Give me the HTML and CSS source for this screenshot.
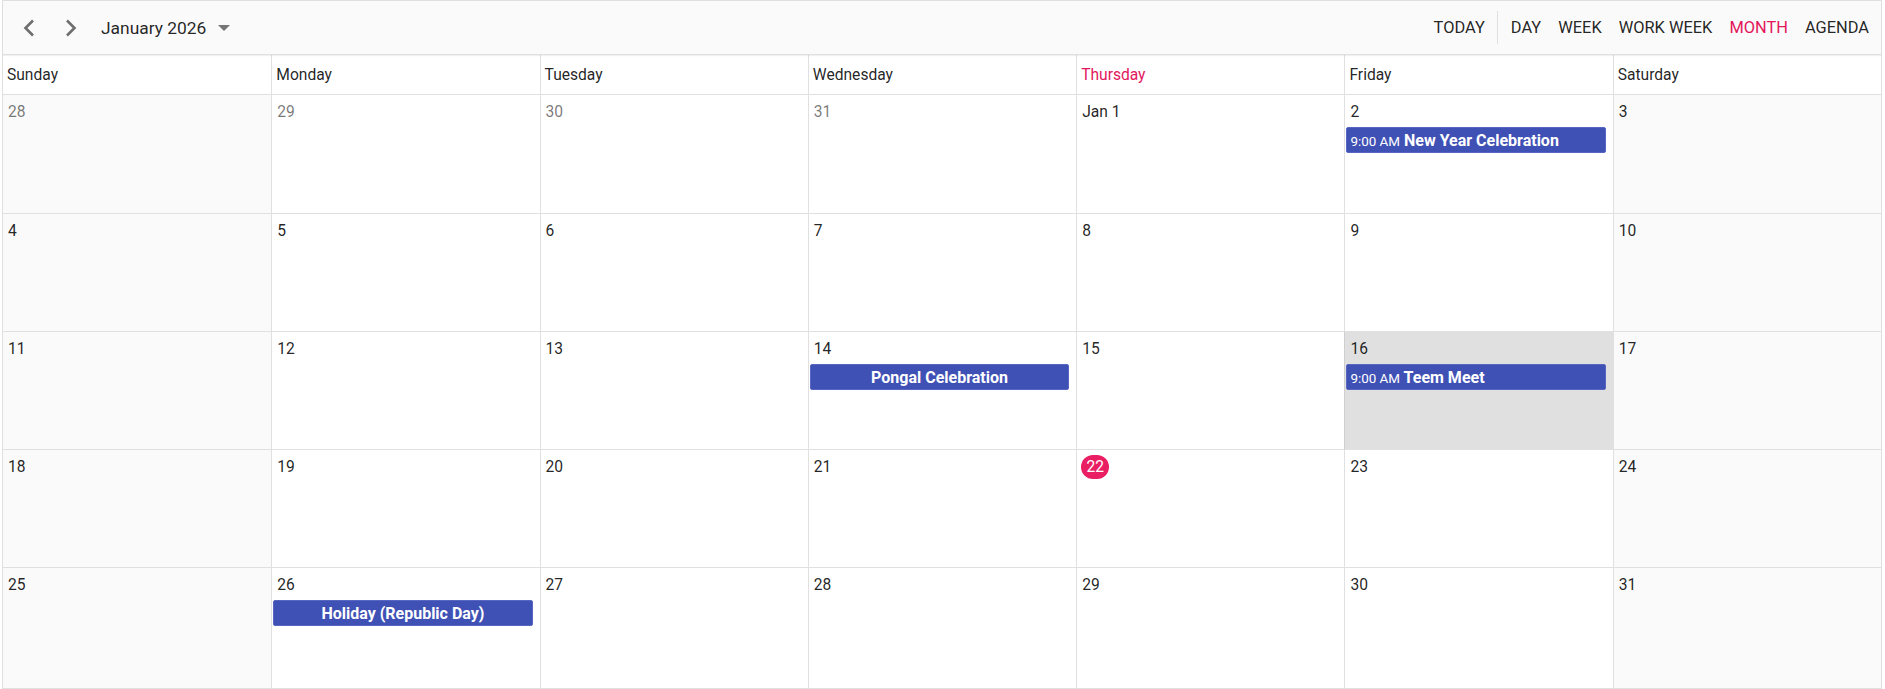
FILE: index.html
```html
<!DOCTYPE html>
<html lang="en">
<head>
    <meta charset="UTF-8">
    <meta name="viewport" content="width=device-width, initial-scale=1.0">
    <title>Schedule - Month</title>
    <link rel="stylesheet" href="styles.css">
</head>
<body>
    <div class="schedule">
        <div class="toolbar">
            <div class="toolbar-left">
                <button class="nav-btn" title="Previous">
                    <svg width="14" height="20" viewBox="0 0 14 20"><path d="M11 2.5 L3.5 10 L11 17.5" fill="none" stroke="#6e6e6e" stroke-width="2.6"/></svg>
                </button>
                <button class="nav-btn" title="Next">
                    <svg width="14" height="20" viewBox="0 0 14 20"><path d="M3 2.5 L10.5 10 L3 17.5" fill="none" stroke="#6e6e6e" stroke-width="2.6"/></svg>
                </button>
                <button class="date-range">January 2026<span class="caret"></span></button>
            </div>
            <div class="toolbar-right">
                <button class="tb-btn">TODAY</button>
                <span class="tb-sep"></span>
                <button class="tb-btn">DAY</button>
                <button class="tb-btn">WEEK</button>
                <button class="tb-btn">WORK WEEK</button>
                <button class="tb-btn active">MONTH</button>
                <button class="tb-btn">AGENDA</button>
            </div>
        </div>

        <div class="day-names">
            <div class="day-name">Sunday</div>
            <div class="day-name">Monday</div>
            <div class="day-name">Tuesday</div>
            <div class="day-name">Wednesday</div>
            <div class="day-name current">Thursday</div>
            <div class="day-name">Friday</div>
            <div class="day-name">Saturday</div>
        </div>

        <div class="month-grid">
            <!-- week 1 -->
            <div class="cell weekend other"><span class="date">28</span></div>
            <div class="cell other"><span class="date">29</span></div>
            <div class="cell other"><span class="date">30</span></div>
            <div class="cell other"><span class="date">31</span></div>
            <div class="cell"><span class="date">Jan 1</span></div>
            <div class="cell">
                <span class="date">2</span>
                <div class="event"><span class="event-time">9:00 AM</span> New Year Celebration</div>
            </div>
            <div class="cell weekend"><span class="date">3</span></div>
            <!-- week 2 -->
            <div class="cell weekend"><span class="date">4</span></div>
            <div class="cell"><span class="date">5</span></div>
            <div class="cell"><span class="date">6</span></div>
            <div class="cell"><span class="date">7</span></div>
            <div class="cell"><span class="date">8</span></div>
            <div class="cell"><span class="date">9</span></div>
            <div class="cell weekend"><span class="date">10</span></div>
            <!-- week 3 -->
            <div class="cell weekend"><span class="date">11</span></div>
            <div class="cell"><span class="date">12</span></div>
            <div class="cell"><span class="date">13</span></div>
            <div class="cell">
                <span class="date">14</span>
                <div class="event all-day">Pongal Celebration</div>
            </div>
            <div class="cell"><span class="date">15</span></div>
            <div class="cell selected">
                <span class="date">16</span>
                <div class="event"><span class="event-time">9:00 AM</span> Teem Meet</div>
            </div>
            <div class="cell weekend"><span class="date">17</span></div>
            <!-- week 4 -->
            <div class="cell weekend"><span class="date">18</span></div>
            <div class="cell"><span class="date">19</span></div>
            <div class="cell"><span class="date">20</span></div>
            <div class="cell"><span class="date">21</span></div>
            <div class="cell"><span class="date today">22</span></div>
            <div class="cell"><span class="date">23</span></div>
            <div class="cell weekend"><span class="date">24</span></div>
            <!-- week 5 -->
            <div class="cell weekend"><span class="date">25</span></div>
            <div class="cell">
                <span class="date">26</span>
                <div class="event all-day">Holiday (Republic Day)</div>
            </div>
            <div class="cell"><span class="date">27</span></div>
            <div class="cell"><span class="date">28</span></div>
            <div class="cell"><span class="date">29</span></div>
            <div class="cell"><span class="date">30</span></div>
            <div class="cell weekend"><span class="date">31</span></div>
        </div>
    </div>
</body>
</html>
```

FILE: styles.css
```css
body {
    margin: 0;
    font-family: Roboto, 'Liberation Sans', sans-serif;
    color: rgba(0, 0, 0, 0.87);
    background: #ffffff;
}
button {
    font-family: inherit;
    background: none;
    border: none;
    padding: 0;
    cursor: pointer;
    color: inherit;
}
.schedule {
    margin-left: 2px;
    width: 1880px;
    height: 689px;
    box-sizing: border-box;
    border: 1px solid #e0e0e0;
    display: flex;
    flex-direction: column;
}

/* Toolbar */
.toolbar {
    height: 53px;
    flex: none;
    background-color: #fafafa;
    border-bottom: 1px solid #e0e0e0;
    box-shadow: 0 1px 1px rgba(0, 0, 0, 0.06);
    display: flex;
    align-items: center;
    justify-content: space-between;
    position: relative;
    z-index: 1;
}
.toolbar-left {
    display: flex;
    align-items: center;
    padding-left: 18px;
}
.nav-btn {
    width: 42px;
    height: 36px;
    display: flex;
    align-items: center;
    justify-content: flex-start;
    padding-left: 1px;
}
.date-range {
    font-size: 17.4px;
    margin-left: -4px;
    display: flex;
    align-items: center;
    color: rgba(0, 0, 0, 0.87);
}
.caret {
    width: 0;
    height: 0;
    margin-left: 12px;
    border-left: 6.5px solid transparent;
    border-right: 6.5px solid transparent;
    border-top: 6px solid #757575;
}
.toolbar-right {
    display: flex;
    align-items: center;
    gap: 17px;
    padding-right: 12px;
}
.tb-btn {
    font-size: 16.4px;
    line-height: 20px;
    color: rgba(0, 0, 0, 0.87);
}
.tb-btn.active {
    color: #e3165b;
}
.tb-sep {
    width: 1px;
    height: 33px;
    background-color: #e0e0e0;
    margin: 0 -4px 0 -5px;
}

/* Day names */
.day-names {
    display: grid;
    grid-template-columns: repeat(7, 1fr);
    flex: none;
    border-bottom: 1px solid #e0e0e0;
}
.day-name {
    height: 39px;
    line-height: 41px;
    font-size: 15.6px;
    padding-left: 4px;
    border-left: 1px solid #e0e0e0;
}
.day-name:first-child {
    border-left: none;
}
.day-name.current {
    color: #e3165b;
}

/* Month cells */
.month-grid {
    flex: 1;
    display: grid;
    grid-template-columns: repeat(7, 1fr);
    grid-template-rows: 119px repeat(3, 118px) 1fr;
}
.cell {
    border-left: 1px solid #e0e0e0;
    border-bottom: 1px solid #e0e0e0;
    padding-top: 5px;
    min-width: 0;
    background-color: #ffffff;
}
.cell:nth-child(7n+1) {
    border-left: none;
}
.cell:nth-last-child(-n+7) {
    border-bottom: none;
}
.cell.weekend {
    background-color: #fafafa;
}
.cell.selected {
    background-color: #e0e0e0;
    border-left-color: #cfcfcf;
}
.date {
    display: inline-block;
    height: 24px;
    line-height: 24px;
    font-size: 15.6px;
    padding: 0 4px;
    margin-left: 1px;
}
.cell.other .date {
    color: rgba(0, 0, 0, 0.54);
}
.date.today {
    background-color: #e91e63;
    color: #ffffff;
    border-radius: 12px;
    margin-left: 4px;
    min-width: 28px;
    box-sizing: border-box;
    text-align: center;
    padding: 0;
}
.event {
    margin: 3px 7px 0 1px;
    height: 26px;
    line-height: 26px;
    box-sizing: border-box;
    background-color: #3f51b5;
    border: 1px solid #5766c0;
    border-radius: 2px;
    color: #ffffff;
    font-size: 16px;
    font-weight: 700;
    padding: 0 3px;
    white-space: nowrap;
    overflow: hidden;
}
.event-time {
    font-size: 13.4px;
    font-weight: 400;
}
.event.all-day {
    text-align: center;
}
```
